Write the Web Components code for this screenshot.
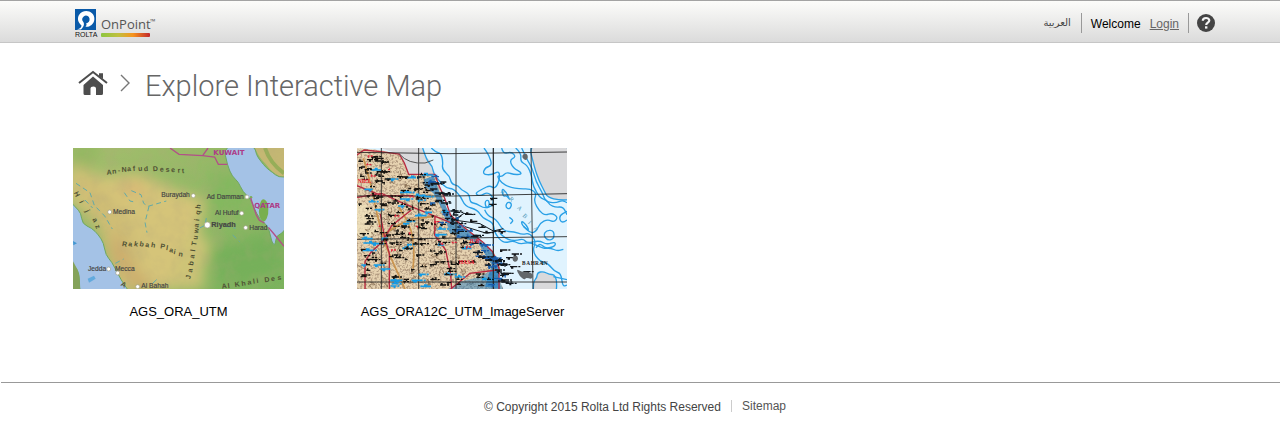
<!DOCTYPE html>
<html lang="en">
<head>
<meta charset="utf-8">
<title>Rolta OnPoint - Explore Interactive Map</title>
<style>
html, body { margin: 0; padding: 0; background: #fff; }
body { font-family: "Liberation Sans", Arial, sans-serif; font-size: 12px; color: #000; }
</style>
</head>
<body>
<portal-page>
  <portal-header slot="header"></portal-header>
  <portal-breadcrumb slot="title">Explore Interactive Map</portal-breadcrumb>
  <map-card><terrain-map slot="image"></terrain-map>AGS_ORA_UTM</map-card>
  <map-card><gulf-map slot="image"></gulf-map>AGS_ORA12C_UTM_ImageServer</map-card>
  <portal-footer slot="footer"></portal-footer>
</portal-page>

<script>
function define(name, html, after) {
  customElements.define(name, class extends HTMLElement {
    constructor() {
      super();
      this.attachShadow({ mode: 'open' }).innerHTML = html;
      if (after) after(this.shadowRoot);
    }
  });
}

/* Rounds the corners of a traced polyline: each vertex becomes a control point. */
function smooth(d) {
  return d.split('M').filter(s => s.trim()).map(part => {
    const closed = /Z/.test(part);
    const p = part.replace('Z', '').split('L').map(s => s.trim().split(/[ ,]+/).map(Number));
    const mid = (a, b) => `${(a[0] + b[0]) / 2} ${(a[1] + b[1]) / 2}`;
    if (closed) {
      const n = p.length;
      return `M${mid(p[n - 1], p[0])}` + p.map((q, i) => `Q${q[0]} ${q[1]} ${mid(q, p[(i + 1) % n])}`).join('') + 'Z';
    }
    let out = `M${p[0].join(' ')}`;
    for (let i = 1; i < p.length - 1; i++) out += `Q${p[i].join(' ')} ${mid(p[i], p[i + 1])}`;
    return out + `L${p[p.length - 1].join(' ')}`;
  }).join('');
}
const smoothPaths = root => root.querySelectorAll('.smooth path').forEach(e => e.setAttribute('d', smooth(e.getAttribute('d'))));

define('portal-page', `
<style>
:host { display: block; }
main { padding: 0 64px 0 73px; }
.maps { display: grid; grid-template-columns: repeat(auto-fill, 211px); gap: 40px 73px; padding: 44px 0 62px; }
</style>
<slot name="header"></slot>
<main>
  <slot name="title"></slot>
  <div class="maps"><slot></slot></div>
</main>
<slot name="footer"></slot>`);

define('onpoint-logo', `
<style>:host { display: block; } svg { display: block; }</style>
<svg width="82" height="30" viewBox="0 0 82 30" role="img" aria-label="Rolta OnPoint">
  <defs><linearGradient id="bar"><stop offset="0" stop-color="#8cc63f"/><stop offset=".35" stop-color="#c0c040"/><stop offset=".65" stop-color="#f7941e"/><stop offset="1" stop-color="#c1272d"/></linearGradient></defs>
  <rect width="21" height="21" fill="#0a5aa8"/>
  <path d="M6.500 16.500C3 13.500 2 9.500 4 6C6.500 1.800 13 .6 17 4.200C20.500 7.600 20 13 16.500 16C14 18 11.500 18 10.500 17.500C11.500 16.500 12 15.500 11 14.500C13.500 14 15 12 14.500 9.500C14 7 11 5.800 9 7.200C7 8.500 6.600 10.800 8 12.500C9.500 14.500 9.500 17 6 20.500H2C5 19.500 6.500 18.500 6.500 16.500Z" fill="#fff"/>
  <text x="0" y="28" font-family="Liberation Sans, Arial, sans-serif" font-size="7" fill="#111">ROLTA</text>
  <text x="26" y="20" font-family="Open Sans, Noto Sans, sans-serif" font-size="13" fill="#555">OnPoint</text>
  <text x="75" y="15" font-family="Open Sans, Noto Sans, sans-serif" font-size="7" fill="#555">™</text>
  <rect x="26" y="24" width="49" height="4" rx="1" fill="url(#bar)"/>
</svg>`);

define('portal-header', `
<style>
:host { display: block; }
header { display: flex; align-items: center; justify-content: space-between; height: 41px; padding: 0 65px 0 75px;
  border-top: 1px solid #a3a3a3; border-bottom: 1px solid #c6c6c6; background: linear-gradient(#fcfcfa, #dbdbdb); }
.logo { display: block; margin-top: 4px; }
nav { display: flex; align-items: center; line-height: 20px; margin-top: 3px; }
nav > * { box-sizing: border-box; }
.lang { font: 10px/20px "DejaVu Sans", sans-serif; color: #444; text-decoration: none; padding-right: 10px; }
.user { display: flex; gap: 9px; height: 20px; padding: 0 9px; border: solid #999; border-width: 0 1px; line-height: 22px; }
.user a { color: #666; }
button { display: block; border: 0; padding: 0; margin-left: 8px; background: none; }
svg { display: block; }
</style>
<header>
  <a class="logo" href="#home"><onpoint-logo></onpoint-logo></a>
  <nav>
    <a class="lang" href="#ar" lang="ar">العربية</a>
    <div class="user"><span>Welcome</span><a href="#login">Login</a></div>
    <button type="button" aria-label="Help"><svg width="18" height="18" viewBox="0 0 18 18"><circle cx="9" cy="9" r="9" fill="#444"/><path d="M5.800 6.800C5.800 3.200 12.300 3 12.300 6.500C12.300 8.700 9.200 8.500 9.200 11" fill="none" stroke="#f4f4f4" stroke-width="2.200"/><rect x="8" y="12.300" width="2.400" height="2.300" fill="#f4f4f4"/></svg></button>
  </nav>
</header>`);

define('portal-breadcrumb', `
<style>
:host { display: block; }
nav { display: flex; align-items: center; padding: 25px 0 0 5px; }
svg { display: block; }
.next { margin: 0 15px 6px 12px; }
a { margin-bottom: 6px; }
h1 { margin: 0; font: 300 29px/36px Roboto, sans-serif; color: #666; }
</style>
<nav aria-label="Breadcrumb">
  <a href="#home" aria-label="Home"><svg width="30" height="26" viewBox="0 0 30 26"><g fill="#4d4d4d"><path d="M15 6.500L25 15V23.500Q25 25 23.500 25H18V18.500Q18 16.500 15.500 16.500Q12.500 16.500 12.500 18.500V25H7Q5.500 25 5.500 23.500V15Z"/><path d="M21 3.500H25V9L21 6Z"/></g><path d="M1 13L15 2L29 13" fill="none" stroke="#fff" stroke-width="4"/><path d="M21 3.500H25V9L21 6Z" fill="#4d4d4d"/><path d="M1 13L15 2L29 13" fill="none" stroke="#4d4d4d" stroke-width="2"/></svg></a>
  <svg class="next" width="10" height="18" viewBox="0 0 10 18"><path d="M1 1L9 9L1 17" fill="none" stroke="#777" stroke-width="1.400"/></svg>
  <h1><slot></slot></h1>
</nav>`);

define('map-card', `
<style>
:host { display: block; }
figure { margin: 0; }
a { color: inherit; text-decoration: none; }
figcaption { margin-top: 15px; font-size: 13px; line-height: 16px; text-align: center; }
</style>
<figure><a href="#map"><slot name="image"></slot><figcaption><slot></slot></figcaption></a></figure>`);

define('portal-footer', `
<style>
:host { display: block; }
footer { display: flex; justify-content: center; gap: 10px; margin-left: 1px; padding: 16px 11px 20px 0; border-top: 1px solid #999; line-height: 16px; color: #444; }
a { color: #555; text-decoration: none; padding-left: 11px; line-height: 14px; background: linear-gradient(#ccc, #ccc) 0 1px / 1px 12px no-repeat; }
</style>
<footer><span>© Copyright 2015 Rolta Ltd Rights Reserved</span><a href="#sitemap">Sitemap</a></footer>`);

/* Map drawings use a grid of three units to a pixel. */
define('terrain-map', `
<style>
:host { display: block; }
svg { display: block; width: 211px; height: 141px; }
text { font-family: "Liberation Sans", Arial, sans-serif; }
.country { font-family: "DejaVu Sans", sans-serif; }
</style>
<svg viewBox="24 24 633 423" role="img" aria-label="Terrain map of Saudi Arabia">
  <defs>
    <filter id="soft" x="-20%" y="-20%" width="140%" height="140%"><feGaussianBlur stdDeviation="20"/></filter>
    <filter id="relief" x="0" y="0" width="100%" height="100%"><feTurbulence type="fractalNoise" baseFrequency=".025" numOctaves="3" seed="4"/><feColorMatrix values="0 0 0 0 .45  0 0 0 0 .38  0 0 0 0 .2  1.600 0 0 0 -.62"/></filter>
    <linearGradient id="east" x1="0" x2="1" y1="0" y2="1"><stop offset="0" stop-color="#a5bd6d"/><stop offset="1" stop-color="#79b35c"/></linearGradient>
  </defs>
  <rect x="24" y="24" width="633" height="423" fill="url(#east)"/>
  <g filter="url(#soft)">
    <path d="M10 80L120 110L220 100L330 150L420 180L400 300L420 447L150 460L100 260L10 170Z" fill="#d5c479"/>
    <path d="M30 60L120 150L210 270L250 447L150 430L120 300L50 180Z" fill="#cfbd74"/>
    <path d="M10 10H110L80 80L20 70Z" fill="#92b861"/>
    <path d="M360 280L440 300L400 447H300L340 350Z" fill="#cec477"/>
    <path d="M430 330L657 270V400L470 447Z" fill="#76b05a"/>
    <path d="M440 90L530 110L580 240L430 220Z" fill="#83b85e"/>
    <ellipse cx="205" cy="145" rx="40" ry="18" fill="#d9b574"/>
    <path d="M145 270L210 400L280 455H220L140 340Z" fill="#cba469"/>
  </g>
  <path d="M570 24H657V115Q625 105 600 70Q580 50 570 24Z" fill="#c5b873"/>
  <path d="M600 24Q615 70 657 100" stroke="#96ae58" stroke-width="12" fill="none"/>
  <rect x="24" y="24" width="633" height="423" filter="url(#relief)" opacity=".3"/>
  <g class="smooth" fill="#a4c2e6" stroke="#6ea861" stroke-width="3">
    <path d="M475 15L487 76L502 110L520 125L533 155L557 177L566 203L585 238L600 249L613 270L620 306L630 318L634 287L650 282L672 252L672 110L641 112L622 97L604 84L587 63L574 45L568 15Z"/>
    <path d="M5 173L32 202L48 219L52 252L80 264L100 284L116 309L122 345L140 365L160 404L177 434L200 465L45 475L43 408L37 388L5 354Z"/>
  </g>
  <g class="smooth"><path d="M587 181L598 176L609 190L611 223L600 247L587 240L580 217Z" fill="#78af4e"/></g>
  <path d="M24 364L37 388L43 408L45 447H24Z" fill="#84a25a"/>
  <circle cx="558" cy="172" r="4" fill="#7cae58"/>
  <path d="M24 303L36 310L25 316Z" fill="#4397d1"/>
  <path d="M68 416L87 407L92 416L72 428Z" fill="#62aadd"/>
  <g fill="none" stroke="#62aaa7" stroke-width="3" stroke-dasharray="15 10">
    <path d="M33 130L75 158L88 196L119 228L142 267"/><path d="M178 158L195 183L212 187"/><path d="M199 152L228 164L236 190L249 199L304 183"/><path d="M252 199L240 247L246 278"/><path d="M60 180L83 204"/><path d="M151 370L176 357M264 429L276 418M404 264L420 256L424 234M481 258L512 265M503 285L524 305"/>
  </g>
  <g fill="none" stroke="#b24f88" stroke-width="4">
    <path d="M315 24L342 43L413 47L449 51L460 73H487"/><path d="M413 47L429 24"/><path d="M557 174L574 225L583 241L598 249"/><path d="M610 262L627 282L657 319"/>
  </g>
  <g fill="#ad3b87" font-size="21" font-weight="bold"><text class="country" x="445" y="46">KUWAIT</text><text class="country" x="568" y="203">QATAR</text></g>
  <g fill="#444" font-size="20" stroke="#444" stroke-width=".5">
    <text x="289" y="171">Buraydah</text><text x="425" y="176">Ad Damman</text><text x="450" y="224">Al Hufuf</text>
    <text x="144" y="222">Medina</text><text x="553" y="269">Harad</text><text x="69" y="392">Jedda</text><text x="150" y="392">Mecca</text><text x="229" y="444">Al Bahah</text>
    <text x="439" y="262" font-size="22" font-weight="bold">Riyadh</text>
  </g>
  <g fill="#4f5133" font-size="21" font-weight="bold">
    <text x="125 142 159 170 187 204 220 237 264 285 302 319 338 351" y="104 101 98 96 94 93 93 94 94 95 96 97 98 100" rotate="-4">An-NafudDesert</text>
    <text x="170 189 206 223 240 257 285 302 312 325 340" y="318 318 318 318 320 321 325 330 336 342 348" rotate="10">RakbahPlain</text>
    <text x="376 381 384 387 390 393 397 399 400 402 404 405" y="418 398 377 356 335 318 300 281 263 244 225 207" rotate="-80">JabalTuwaiqh</text>
    <text x="471 489 510 530 548 565 575 599 619 638" y="446 445 441 438 434 431 429 427 424 421" rotate="-8">AlKhaliDes</text>
    <text x="26 42 60 82 90" y="158 186 213 238 258" rotate="65">Hijaz</text><text x="166" y="436" rotate="30">A</text>
  </g>
  <g fill="#fff" stroke="#a1a088" stroke-width="2"><circle cx="385" cy="167" r="6"/><circle cx="546" cy="171" r="6"/><circle cx="530" cy="220" r="6"/><circle cx="542" cy="263" r="6"/><circle cx="134" cy="216" r="6"/><circle cx="131" cy="387" r="6"/><circle cx="158" cy="399" r="6"/><circle cx="218" cy="440" r="6"/><circle cx="427" cy="255" r="9"/></g>
</svg>`, smoothPaths);

define('gulf-map', `
<style>
:host { display: block; }
svg { display: block; width: 210px; height: 141px; }
text { font-family: "Liberation Serif", serif; }
</style>
<svg viewBox="21 24 630 423" role="img" aria-label="Topographic map of the Arabian Gulf coast">
  <defs>
    <clipPath id="land"><path d="M21 24L91 31L148 42L163 69L176 103H255L266 140L278 170L290 205L312 235L338 260L380 290L398 310L430 335L444 360L452 390L445 415L460 447H21Z"/></clipPath>
    <filter id="grain" x="0" y="0" width="100%" height="100%"><feTurbulence type="fractalNoise" baseFrequency=".16" numOctaves="2" seed="8"/><feColorMatrix values="0 0 0 0 .45  0 0 0 0 .33  0 0 0 0 .22  4.500 0 0 0 -2.050"/></filter>
  </defs>
  <rect x="21" y="24" width="630" height="423" fill="#e0f3fe"/>
  <path d="M91 24H218L222 44L240 62L254 103H176L163 69L148 42Z" fill="#d9d9db"/>
  <g class="smooth" fill="#d9d9db" stroke="#2aa0e6" stroke-width="4">
    <path d="M534 4L671 4L671 178L630 181L592 172L582 151L567 122L554 85Z"/>
    <path d="M550 467L550 425L561 413L562 398L580 394L599 404L612 403L621 421L618 467Z"/>
  </g>
  <g clip-path="url(#land)">
    <rect x="21" y="24" width="440" height="423" fill="#e6d2b0"/>
    <rect x="21" y="24" width="440" height="423" filter="url(#grain)"/>
    <path d="M21 190L50 195L80 230V280L40 300L21 290Z" fill="#f0e2bd" opacity=".7"/>
    <g id="contours" fill="none" stroke="#80674c" stroke-width="2"></g>
    <g class="smooth" fill="none" stroke="#ca944e" stroke-width="5"><path d="M40 55L60 120L80 220L102 305L130 370L165 447"/><path d="M145 200L182 250L193 335L189 385"/><path d="M100 285L160 240L245 230"/></g>
    <path d="M222 118L250 108L274 170L310 239L410 315L445 360L451 447L405 440L425 375L385 310L300 280L275 205L250 160L225 140Z" fill="#187dc8" opacity=".65"/>
    <path d="M295 447L330 425L390 410L440 380L460 447Z" fill="#187dc8" opacity=".45"/>
  </g>
  <g class="smooth" fill="none" stroke="#2aa0e6" stroke-width="4">
    <path d="M218 24L230 62L247 78L251 103L270 125L290 145L310 146L333 170L345 199L382 209L398 235L430 247L434 280L460 310L490 302L510 313L540 306L580 326L601 324L622 333L640 328"/>
    <path d="M244 24L256 36L273 40L279 65L276 88L299 108L304 132L325 137L334 150L358 161L360 188L379 190L403 206L430 196L430 171L412 156L390 169L374 160L400 146L419 136L435 147L449 121L448 92L425 105L398 103L405 83L427 76L416 44L402 24"/>
    <path d="M455 24L459 42L485 35L498 51L479 59L488 83L520 101L495 105L469 96L456 111L440 106L454 129L479 142L510 147L540 146L560 160L551 183L569 215L586 226L605 219L624 231L613 247L593 238L570 249L559 274L542 280L520 259"/>
    <path d="M497 24L514 39L511 66L532 75L546 110L549 139L571 175L590 180L599 195L617 202L639 200L651 224"/>
    <path d="M515 24L530 57L547 85L558 125L577 158L587 185L617 189L637 181L651 188"/>
    <path d="M404 209L412 228L438 236L460 274L493 275L516 284L539 279L558 304L547 334L570 365L594 370L614 395L633 400L638 440L651 435"/>
    <path d="M651 240L635 252L626 228L651 214M450 280L468 299L500 302L520 296L531 310L568 301L590 314L616 305L616 319L586 326L571 310L558 323"/>
    <path d="M455 145L468 155L481 182L470 166L459 170ZM472 185L486 190L480 208L466 202ZM404 184L415 179L419 195L409 206ZM514 242L529 254L538 274L516 256ZM590 270L612 272L612 296L594 302L580 286ZM478 232L492 240L481 251M610 410L651 419"/>
  </g>
  <g fill="none" stroke="#b7283e" stroke-width="4">
    <path d="M21 45L42 30L91 35L148 42L163 69L176 103H255L266 135L284 175L302 226L340 260L398 306L428 335L447 385V447"/>
    <path d="M21 137L95 167H190M21 172L95 160L160 190L302 248M184 210L160 229L125 257L96 306L62 338L45 365V447M91 222L103 288L118 340V447M255 230L254 285L287 330L302 403L305 447M302 447L360 400L441 390"/>
  </g>
  <g fill="none" stroke="#222" stroke-width="3" opacity=".85"><path d="M94 24V447M206 24V447M318 24V447M430 24V447L430 24M543 24L549 447M21 37L300 41L651 36M21 168H310L651 161M21 298L651 290M21 426H651"/></g>
  <path d="M148 42Q175 73 225 69L250 60" fill="none" stroke="#555" stroke-width="3"/>
  <g fill="none" stroke="#11181f" stroke-width="3"><path d="M312 240L342 220L370 224M318 241L390 251L430 273L460 266M300 250L335 227M345 260L410 280L452 271"/></g>
  <g id="names"></g>
  <g class="smooth" fill="#62676a"><path d="M487 350L498 345L506 354L500 366L488 364Z"/><path d="M518 42L530 40L535 52L528 62L516 54Z"/><path d="M498 386L515 396L535 395L552 405L545 418L528 412L524 420L508 408Z"/></g>
  <g fill="#4894b6" font-size="18"><text x="451 476 500 517 533 549" y="156 178 204 228 249 266" rotate="45">ARABIA</text></g>
  <g fill="#222" font-size="16" font-weight="bold"><text x="516 529 542 555 568 575" y="375">BAHRAIN</text></g>
  <g fill="#ee1d32" font-size="17" font-weight="bold"><text x="23" y="129">NIEL</text><text x="326" y="373">HASA</text><text x="356" y="309">JUB</text></g>
</svg>`, root => {
  smoothPaths(root);
  /* Seeded generator, so the dense place marks are always the same. */
  let seed = 71;
  const rnd = () => (seed = (seed * 16807) % 2147483647) / 2147483647;
  const coastX = y => y < 100 ? 125 + y * .35 : y < 250 ? 240 + (y - 100) * .46 : 310 + (y - 250) * 1.1;
  let marks = '', lines = '';
  const mark = (x, y, w, h, c) => {
    const up = rnd() < .5 ? 4 : -4;
    marks += `<path d="M${x | 0} ${y | 0}h${w | 0}${rnd() < .6 ? 'm3 0h6' : ''}M${(x + w * rnd() * .6) | 0} ${(y + up) | 0}h${(w / 3) | 0}" fill="none" stroke="${c}" stroke-width="${h}"/>`;
  };
  for (let i = 0; i < 42; i++) {
    const y = 90 + rnd() * 350, x = 25 + rnd() * (Math.min(coastX(y), 450) - 40);
    mark(x, y, 15 + rnd() * 22, 5, '#159be5');
  }
  for (let i = 0; i < 165; i++) {
    const y = 50 + rnd() * 390, x = 25 + rnd() * (Math.min(coastX(y), 450) - 45);
    mark(x, y, 6 + rnd() * 14, 4, '#15130f');
  }
  for (let i = 0; i < 90; i++) {
    const y = 105 + rnd() * 335, x = Math.min(coastX(y), 455) - 45 + rnd() * 65;
    mark(x, y, 6 + rnd() * 20, 4, i % 3 ? '#101820' : '#185dac');
  }
  for (let i = 0; i < 15; i++) {
    const y = 45 + rnd() * 385;
    mark(25 + rnd() * (coastX(y) - 60), y, 6, 4, '#df243a');
  }
  [[420, 175], [418, 193], [345, 223], [360, 244], [385, 262], [400, 278], [445, 275], [450, 330], [485, 342], [468, 353], [480, 380], [460, 400], [520, 395], [455, 420]].forEach(p => mark(p[0], p[1], 22, 4, '#15191d'));
  for (let i = 0; i < 75; i++) {
    const x = 40 + rnd() * 330, y = 50 + rnd() * 390;
    lines += `M${x | 0} ${y | 0}`;
    for (let j = 0; j < 5; j++) lines += `l${(rnd() * 24 - 12) | 0} ${(rnd() * 24 - 12) | 0}`;
  }
  root.getElementById('names').innerHTML = marks;
  root.getElementById('contours').innerHTML = `<path d="${lines}"/>`;
});
</script>
</body>
</html>
